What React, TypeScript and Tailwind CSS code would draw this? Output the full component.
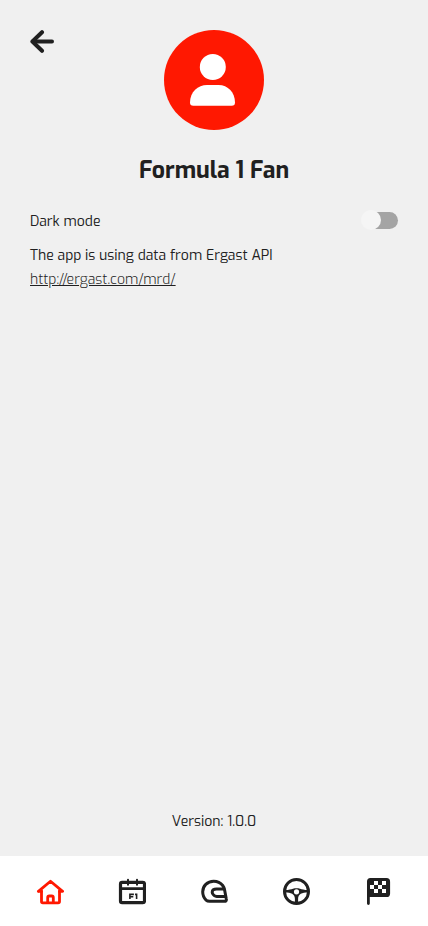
import React, { useState } from "react";

const tabs = ["Home", "Calendar", "Drivers", "Teams", "Results"] as const;
type Tab = (typeof tabs)[number];

function TabIcon({ name }: { name: Tab }) {
  return (
    <svg viewBox="0 0 28 28" className="size-7" fill="none" stroke="currentColor" strokeWidth="2.8" strokeLinecap="round" strokeLinejoin="round" aria-hidden="true">
      {name === "Home" && (
        <>
          <path d="M5.5 14v10.5q0 1.4 1.4 1.4h15.2q1.4 0 1.4-1.4V14" />
          <path d="M2.4 14.4 14.5 4.2 26.6 14.4H23.5M2.4 14.4H5.5" />
          <path d="M11.7 25v-4.2q0-1.8 1.6-1.8h2.4q1.6 0 1.6 1.8V25" />
        </>
      )}
      {name === "Calendar" && (
        <>
          <rect x="2.5" y="5.4" width="24" height="20.2" rx="1.6" strokeWidth="3.2" />
          <path d="M2.4 11.6h24.2" strokeWidth="2.8" />
          <path d="M10 2.8v5M19 2.8v5" strokeWidth="2" />
          <path d="M11.9 21.900v-4.500h4M11.900 19.800h3.400M17 17.400h1.600v4.500" strokeWidth="1.6" strokeLinecap="butt" strokeLinejoin="miter" />
        </>
      )}
      {name === "Drivers" && (
        <>
          <path d="M22.700 8.500C20.500 5.700 17.300 4.200 13.700 4.200 7.200 4.200 2.700 9 2.700 14.800c0 3.300 1.300 6.300 3.400 8.300 1 .9 1.900 1.200 3.400 1.200h15c1.400 0 2.100-.9 1.800-2.200L24.600 12.900q-.5-2.600-1.900-4.400Z" strokeWidth="3" />
          <path d="M24 11.900h-7.500c-2.800 0-4.300 1.300-4.300 3.300 0 1.200.5 2 1.400 2.800l.8.700q1 .8 2.300.8h8.500" strokeWidth="3" />
        </>
      )}
      {name === "Teams" && (
        <>
          <circle cx="14.5" cy="14.500" r="12" strokeWidth="3" />
          <path d="M3 13c4 0 6-.8 8-1.300 2.300-.6 4.700-.6 7 0 2 .5 4 1.300 8 1.300v2.600c-6 0-9.900 1.400-9.900 6.400v4.500h-3.200V22c0-5-3.900-6.400-9.900-6.400Z" fill="currentColor" stroke="none" />
          <circle cx="14.500" cy="14.800" r="2.600" fill="white" stroke="none" />
        </>
      )}
      {name === "Results" && (
        <>
          <path d="M4.400 26.600V4.400q0-1.900 1.900-1.900H22.500q2.200 0 2.200 2.200v11.700q0 2.200-2.200 2.200H5" />
          <path d="M5 4h19v14H5z" fill="currentColor" stroke="none" />
          <path d="M10 4h4v4h-4zM18 4h4v4h-4zM6 8h4v4h-4zM14 8h4v4h-4zM10 12h4v4h-4zM18 12h4v4h-4z" fill="white" stroke="none" />
        </>
      )}
    </svg>
  );
}

export default function App() {
  const [dark, setDark] = useState(false);
  return (
    <div className="flex min-h-screen flex-col bg-[#f0f0f0] font-['Exo','Exo_2','Noto_Sans',sans-serif] text-sm text-[#202020]">
      <main className="flex grow flex-col px-[30px] pt-[30px] pb-[22px]">
        <header className="grid grid-cols-[1fr_auto_1fr] items-start">
          <button type="button" aria-label="Back" className="w-6">
            <svg viewBox="0 0 24 24" className="size-6" fill="none" stroke="currentColor" strokeWidth="4" strokeLinecap="round" strokeLinejoin="round" aria-hidden="true">
              <path d="M12 2.2 2.4 11.5 12 20.8" />
              <path d="M3 11.5h19" />
            </svg>
          </button>
          <svg viewBox="0 0 100 100" className="size-[100px]" aria-hidden="true">
            <circle cx="50" cy="50" r="50" fill="#ff1801" />
            <circle cx="48.8" cy="37" r="13" fill="white" />
            <path d="M26 72.5C26 62 34 55 43 55h11.500C64 55 71 62.500 71 72.500q0 3.300-3.300 3.300H29.300Q26 75.800 26 72.500Z" fill="white" />
          </svg>
        </header>
        <h1 className="mt-6 text-center text-[23px] leading-[34px] font-bold">Formula 1 Fan</h1>
        <div className="mt-[22px] flex h-5 items-center justify-between">
          <label htmlFor="dark-mode" className="pt-1">Dark mode</label>
          <input
            id="dark-mode"
            type="checkbox"
            role="switch"
            checked={dark}
            onChange={(e) => setDark(e.target.checked)}
            className="flex h-[17px] w-9 appearance-none items-center rounded-full bg-[#a4a4a4] before:-ml-px before:size-5 before:shrink-0 before:rounded-full before:bg-[#f5f5f5] checked:justify-end checked:bg-[#ff1801]"
          />
        </div>
        <p className="mt-3.5 leading-6">The app is using data from Ergast API</p>
        <p className="leading-6 font-light">
          <a href="http://ergast.com/mrd/" className="underline">http://ergast.com/mrd/</a>
        </p>
        <p className="mt-auto text-center leading-6">Version: 1.0.0</p>
      </main>
      <nav className="grid h-[70px] grid-cols-5 items-center bg-white px-[9px]">
        {tabs.map((tab) => (
          <button key={tab} type="button" aria-label={tab} className={"flex justify-center " + (tab === "Home" ? "text-[#ff1801]" : "")}>
            <TabIcon name={tab} />
          </button>
        ))}
      </nav>
    </div>
  );
}
